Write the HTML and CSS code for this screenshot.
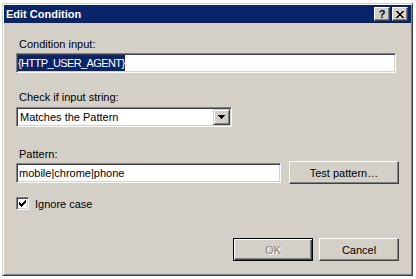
FILE: index.html
```html
<!DOCTYPE html>
<html lang="en">
<head>
    <meta charset="UTF-8">
    <meta name="viewport" content="width=device-width, initial-scale=1.0">
    <title>Edit Condition</title>
    <link rel="stylesheet" href="styles.css">
</head>
<body>
    <div class="window">
        <div class="titlebar">
            <span class="title">Edit Condition</span>
            <div class="caption-buttons">
                <span class="cap-btn help">?</span>
                <span class="cap-btn close">
                    <svg width="8" height="7" viewBox="0 0 8 7">
                        <path d="M0 0h2v1h-2zM6 0h2v1h-2zM1 1h2v1h-2zM5 1h2v1h-2zM2 2h4v1h-4zM3 3h2v1h-2zM2 4h4v1h-4zM1 5h2v1h-2zM5 5h2v1h-2zM0 6h2v1h-2zM6 6h2v1h-2z" fill="#000"/>
                    </svg>
                </span>
            </div>
        </div>

        <div class="content">
            <div class="label">Condition input:</div>
            <div class="field condition">
                <span class="selected">{HTTP_USER_AGENT}</span>
            </div>

            <div class="label check-label">Check if input string:</div>
            <div class="combo">
                <span class="combo-text">Matches the Pattern</span>
                <span class="combo-btn">
                    <svg width="7" height="4" viewBox="0 0 7 4">
                        <path d="M0 0h7v1h-1v1h-1v1h-1v1h-1v-1h-1v-1h-1v-1h-1z" fill="#000"/>
                    </svg>
                </span>
            </div>

            <div class="label pattern-label">Pattern:</div>
            <div class="pattern-row">
                <div class="field pattern">mobile|chrome|phone</div>
                <div class="btn test-btn">Test pattern…</div>
            </div>

            <div class="check-row">
                <span class="checkbox">
                    <svg width="7" height="7" viewBox="0 0 7 7">
                        <path d="M6 0h1v1h-1zM5 1h2v1h-2zM0 2h1v1h-1zM4 2h3v1h-3zM0 3h2v1h-2zM3 3h3v1h-3zM0 4h5v1h-5zM1 5h3v1h-3zM2 6h1v1h-1z" fill="#000"/>
                    </svg>
                </span>
                <span>Ignore case</span>
            </div>

            <div class="actions">
                <div class="btn default disabled">OK</div>
                <div class="btn">Cancel</div>
            </div>
        </div>
    </div>
</body>
</html>
```

FILE: styles.css
```css
body {
    margin: 0;
    background-color: #fff;
    font-family: "Liberation Sans", Arial, sans-serif;
    font-size: 11px;
    color: #000;
}
.window {
    box-sizing: border-box;
    width: 411px;
    height: 273px;
    margin: 3px 0 0 2px;
    padding: 1px;
    background-color: #d4d0c8;
    border: 1px solid;
    border-color: #d4d0c8 #404040 #404040 #d4d0c8;
    box-shadow: inset 1px 1px #fff, inset -1px -1px #808080;
}
.titlebar {
    height: 18px;
    display: flex;
    align-items: center;
    justify-content: space-between;
    padding: 0 3px 0 2px;
    background-color: #0a246a;
}
.title {
    color: #fff;
    font-weight: bold;
    line-height: 13px;
}
.caption-buttons {
    display: flex;
    gap: 2px;
}
.cap-btn {
    box-sizing: border-box;
    width: 16px;
    height: 14px;
    display: flex;
    align-items: center;
    justify-content: center;
    background-color: #d4d0c8;
    border: 1px solid;
    border-color: #fff #404040 #404040 #fff;
    box-shadow: inset -1px -1px #808080;
}
.help {
    font-weight: bold;
    font-size: 11px;
    line-height: 12px;
}
.content {
    padding: 15px 12px 0 12px;
}
.label {
    line-height: 13px;
    padding-left: 3px;
}
.field {
    box-sizing: border-box;
    height: 20px;
    display: flex;
    align-items: center;
    padding: 1px;
    background-color: #fff;
    border: 1px solid;
    border-color: #808080 #fff #fff #808080;
    box-shadow: inset 1px 1px #404040, inset -1px -1px #d4d0c8;
    white-space: nowrap;
}
.condition {
    width: 380px;
    margin-top: 2px;
}
.selected {
    display: block;
    line-height: 16px;
    background-color: #0a246a;
    color: #fff;
    letter-spacing: -0.6px;
}
.check-label {
    margin-top: 18px;
}
.combo {
    box-sizing: border-box;
    width: 216px;
    height: 20px;
    margin-top: 3px;
    display: flex;
    align-items: stretch;
    padding: 1px;
    background-color: #fff;
    border: 1px solid;
    border-color: #808080 #fff #fff #808080;
    box-shadow: inset 1px 1px #404040, inset -1px -1px #d4d0c8;
}
.combo-text {
    flex: 1;
    padding-left: 2px;
    line-height: 16px;
}
.combo-btn {
    box-sizing: border-box;
    width: 17px;
    display: flex;
    align-items: center;
    justify-content: center;
    background-color: #d4d0c8;
    border: 1px solid;
    border-color: #d4d0c8 #404040 #404040 #d4d0c8;
    box-shadow: inset 1px 1px #fff, inset -1px -1px #808080;
}
.pattern-label {
    margin-top: 21px;
}
.pattern-row {
    display: flex;
    align-items: flex-start;
    gap: 8px;
}
.pattern {
    width: 265px;
    margin-top: 2px;
    padding-left: 2px;
}
.btn {
    box-sizing: border-box;
    width: 80px;
    height: 23px;
    display: flex;
    align-items: center;
    justify-content: center;
    background-color: #d4d0c8;
    border: 1px solid;
    border-color: #fff #404040 #404040 #fff;
    box-shadow: inset -1px -1px #808080;
}
.test-btn {
    width: 110px;
}
.btn.default {
    border-color: #000;
    box-shadow: inset 1px 1px #fff, inset -1px -1px #404040, inset -2px -2px #808080;
}
.btn.disabled {
    color: #808080;
    text-shadow: 1px 1px #fff;
}
.check-row {
    margin-top: 13px;
    height: 13px;
    display: flex;
    align-items: center;
    gap: 6px;
}
.checkbox {
    box-sizing: border-box;
    width: 13px;
    height: 13px;
    display: flex;
    align-items: center;
    justify-content: center;
    background-color: #fff;
    border: 1px solid;
    border-color: #808080 #fff #fff #808080;
    box-shadow: inset 1px 1px #404040, inset -1px -1px #d4d0c8;
}
.actions {
    margin-top: 28px;
    display: flex;
    justify-content: flex-end;
    gap: 6px;
}
```
